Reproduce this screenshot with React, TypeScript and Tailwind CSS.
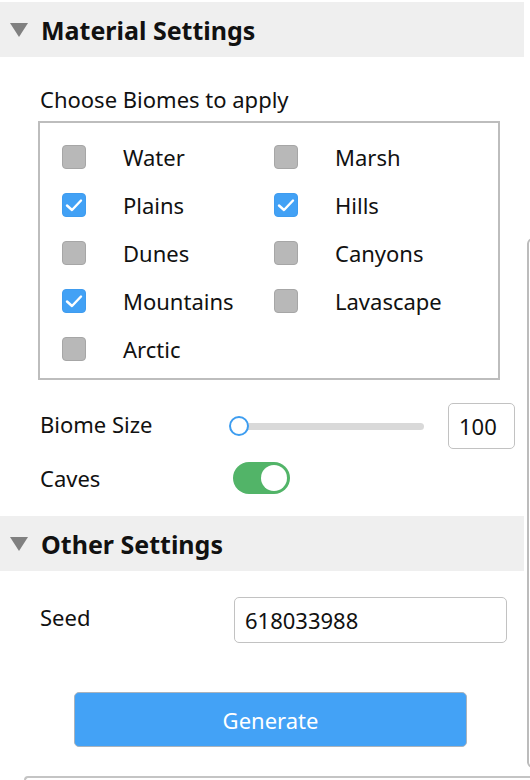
import { useState } from "react";

type Biome = { name: string; checked: boolean };

const biomes: Biome[] = [
  { name: "Water", checked: false },
  { name: "Marsh", checked: false },
  { name: "Plains", checked: true },
  { name: "Hills", checked: true },
  { name: "Dunes", checked: false },
  { name: "Canyons", checked: false },
  { name: "Mountains", checked: true },
  { name: "Lavascape", checked: false },
  { name: "Arctic", checked: false },
];

function SectionHeader({ title }: { title: string }) {
  return (
    <div className="flex h-[55px] w-[524px] items-center bg-[#efefef]">
      <svg width="18" height="14" viewBox="0 0 18 14" className="ml-[10px]">
        <path d="M0 0 H18 L9 14 Z" fill="#808080" />
      </svg>
      <span className="ml-[13px] text-[25px] leading-[30px] font-bold text-[#111]">{title}</span>
    </div>
  );
}

function Checkbox({ checked, onClick }: { checked: boolean; onClick: () => void }) {
  return (
    <button
      type="button"
      onClick={onClick}
      className={
        checked
          ? "flex h-[24px] w-[24px] items-center justify-center rounded-[4px] border border-[#3f9cef] bg-[#42a1f5]"
          : "h-[24px] w-[24px] rounded-[4px] border border-[#a6a6a6] bg-[#b8b8b8]"
      }
    >
      {checked && (
        <svg width="18" height="14" viewBox="0 0 18 14">
          <path d="M2 7.5 L7 12 L16 2.5" fill="none" stroke="white" strokeWidth="2.4" strokeLinecap="round" strokeLinejoin="round" />
        </svg>
      )}
    </button>
  );
}

export default function App() {
  const [items, setItems] = useState(biomes);
  const [caves, setCaves] = useState(true);

  const toggle = (i: number) =>
    setItems(items.map((b, j) => (j === i ? { ...b, checked: !b.checked } : b)));

  return (
    <div
      className="relative h-[780px] w-[530px] overflow-hidden bg-white pt-[2px] text-[#111]"
      style={{ fontFamily: '"Noto Sans", "Open Sans", sans-serif' }}
    >
      <SectionHeader title="Material Settings" />

      <div className="pl-[40px] pt-[27px] text-[22px] leading-[30px]">Choose Biomes to apply</div>

      <div className="ml-[38px] mt-[7px] h-[259px] w-[462px] border-2 border-[#bdbdbd] pl-[22px] pt-[10px]">
        <div className="grid grid-cols-[212px_212px]">
          {items.map((b, i) => (
            <div key={b.name} className="flex h-[48px] items-center">
              <Checkbox checked={b.checked} onClick={() => toggle(i)} />
              <span className="ml-[37px] text-[22px] leading-[30px]">{b.name}</span>
            </div>
          ))}
        </div>
      </div>

      <div className="mt-[23px] flex h-[46px] items-center pl-[40px]">
        <span className="w-[192px] -translate-y-[2px] text-[22px] leading-[30px]">Biome Size</span>
        <div className="relative flex h-[20px] w-[192px] items-center">
          <div className="h-[7px] w-full rounded-full bg-[#d9d9d9]" />
          <div className="absolute left-[-3px] top-0 h-[20px] w-[20px] rounded-full border-2 border-[#3d9df0] bg-white" />
        </div>
        <div className="ml-[24px] flex h-[46px] w-[67px] items-center rounded-[5px] border border-[#c2c2c2] pl-[10px] text-[22px] leading-[30px]">
          100
        </div>
      </div>

      <div className="mt-[13px] flex h-[32px] items-center pl-[40px]">
        <span className="w-[193px] text-[22px] leading-[30px]">Caves</span>
        <button
          type="button"
          onClick={() => setCaves(!caves)}
          className={
            caves
              ? "flex h-[32px] w-[57px] items-center justify-end rounded-full bg-[#52b468] pr-[3px]"
              : "flex h-[32px] w-[57px] items-center justify-start rounded-full bg-[#cccccc] pl-[3px]"
          }
        >
          <span className="h-[26px] w-[26px] rounded-full bg-white" />
        </button>
      </div>

      <div className="mt-[22px]">
        <SectionHeader title="Other Settings" />
      </div>

      <div className="mt-[26px] flex h-[46px] items-center pl-[40px]">
        <span className="w-[194px] -translate-y-[3px] text-[22px] leading-[30px]">Seed</span>
        <div className="flex h-[46px] w-[273px] items-center rounded-[5px] border border-[#c2c2c2] pl-[10px] text-[22px] leading-[30px]">
          618033988
        </div>
      </div>

      <button
        type="button"
        className="ml-[74px] mt-[49px] flex h-[55px] w-[393px] items-center justify-center rounded-[5px] border border-[#a9b3bd] bg-[#43a2f6] text-[22px] leading-[30px] text-white"
      >
        Generate
      </button>

      <div className="ml-[24px] mt-[29px] h-[20px] rounded-tl-[4px] border-l-2 border-t-2 border-[#c4c4c4]" />

      <div className="absolute left-[527px] top-[238px] h-[530px] w-[20px] rounded-[6px] border-2 border-[#bcbcbc]" />
    </div>
  );
}
